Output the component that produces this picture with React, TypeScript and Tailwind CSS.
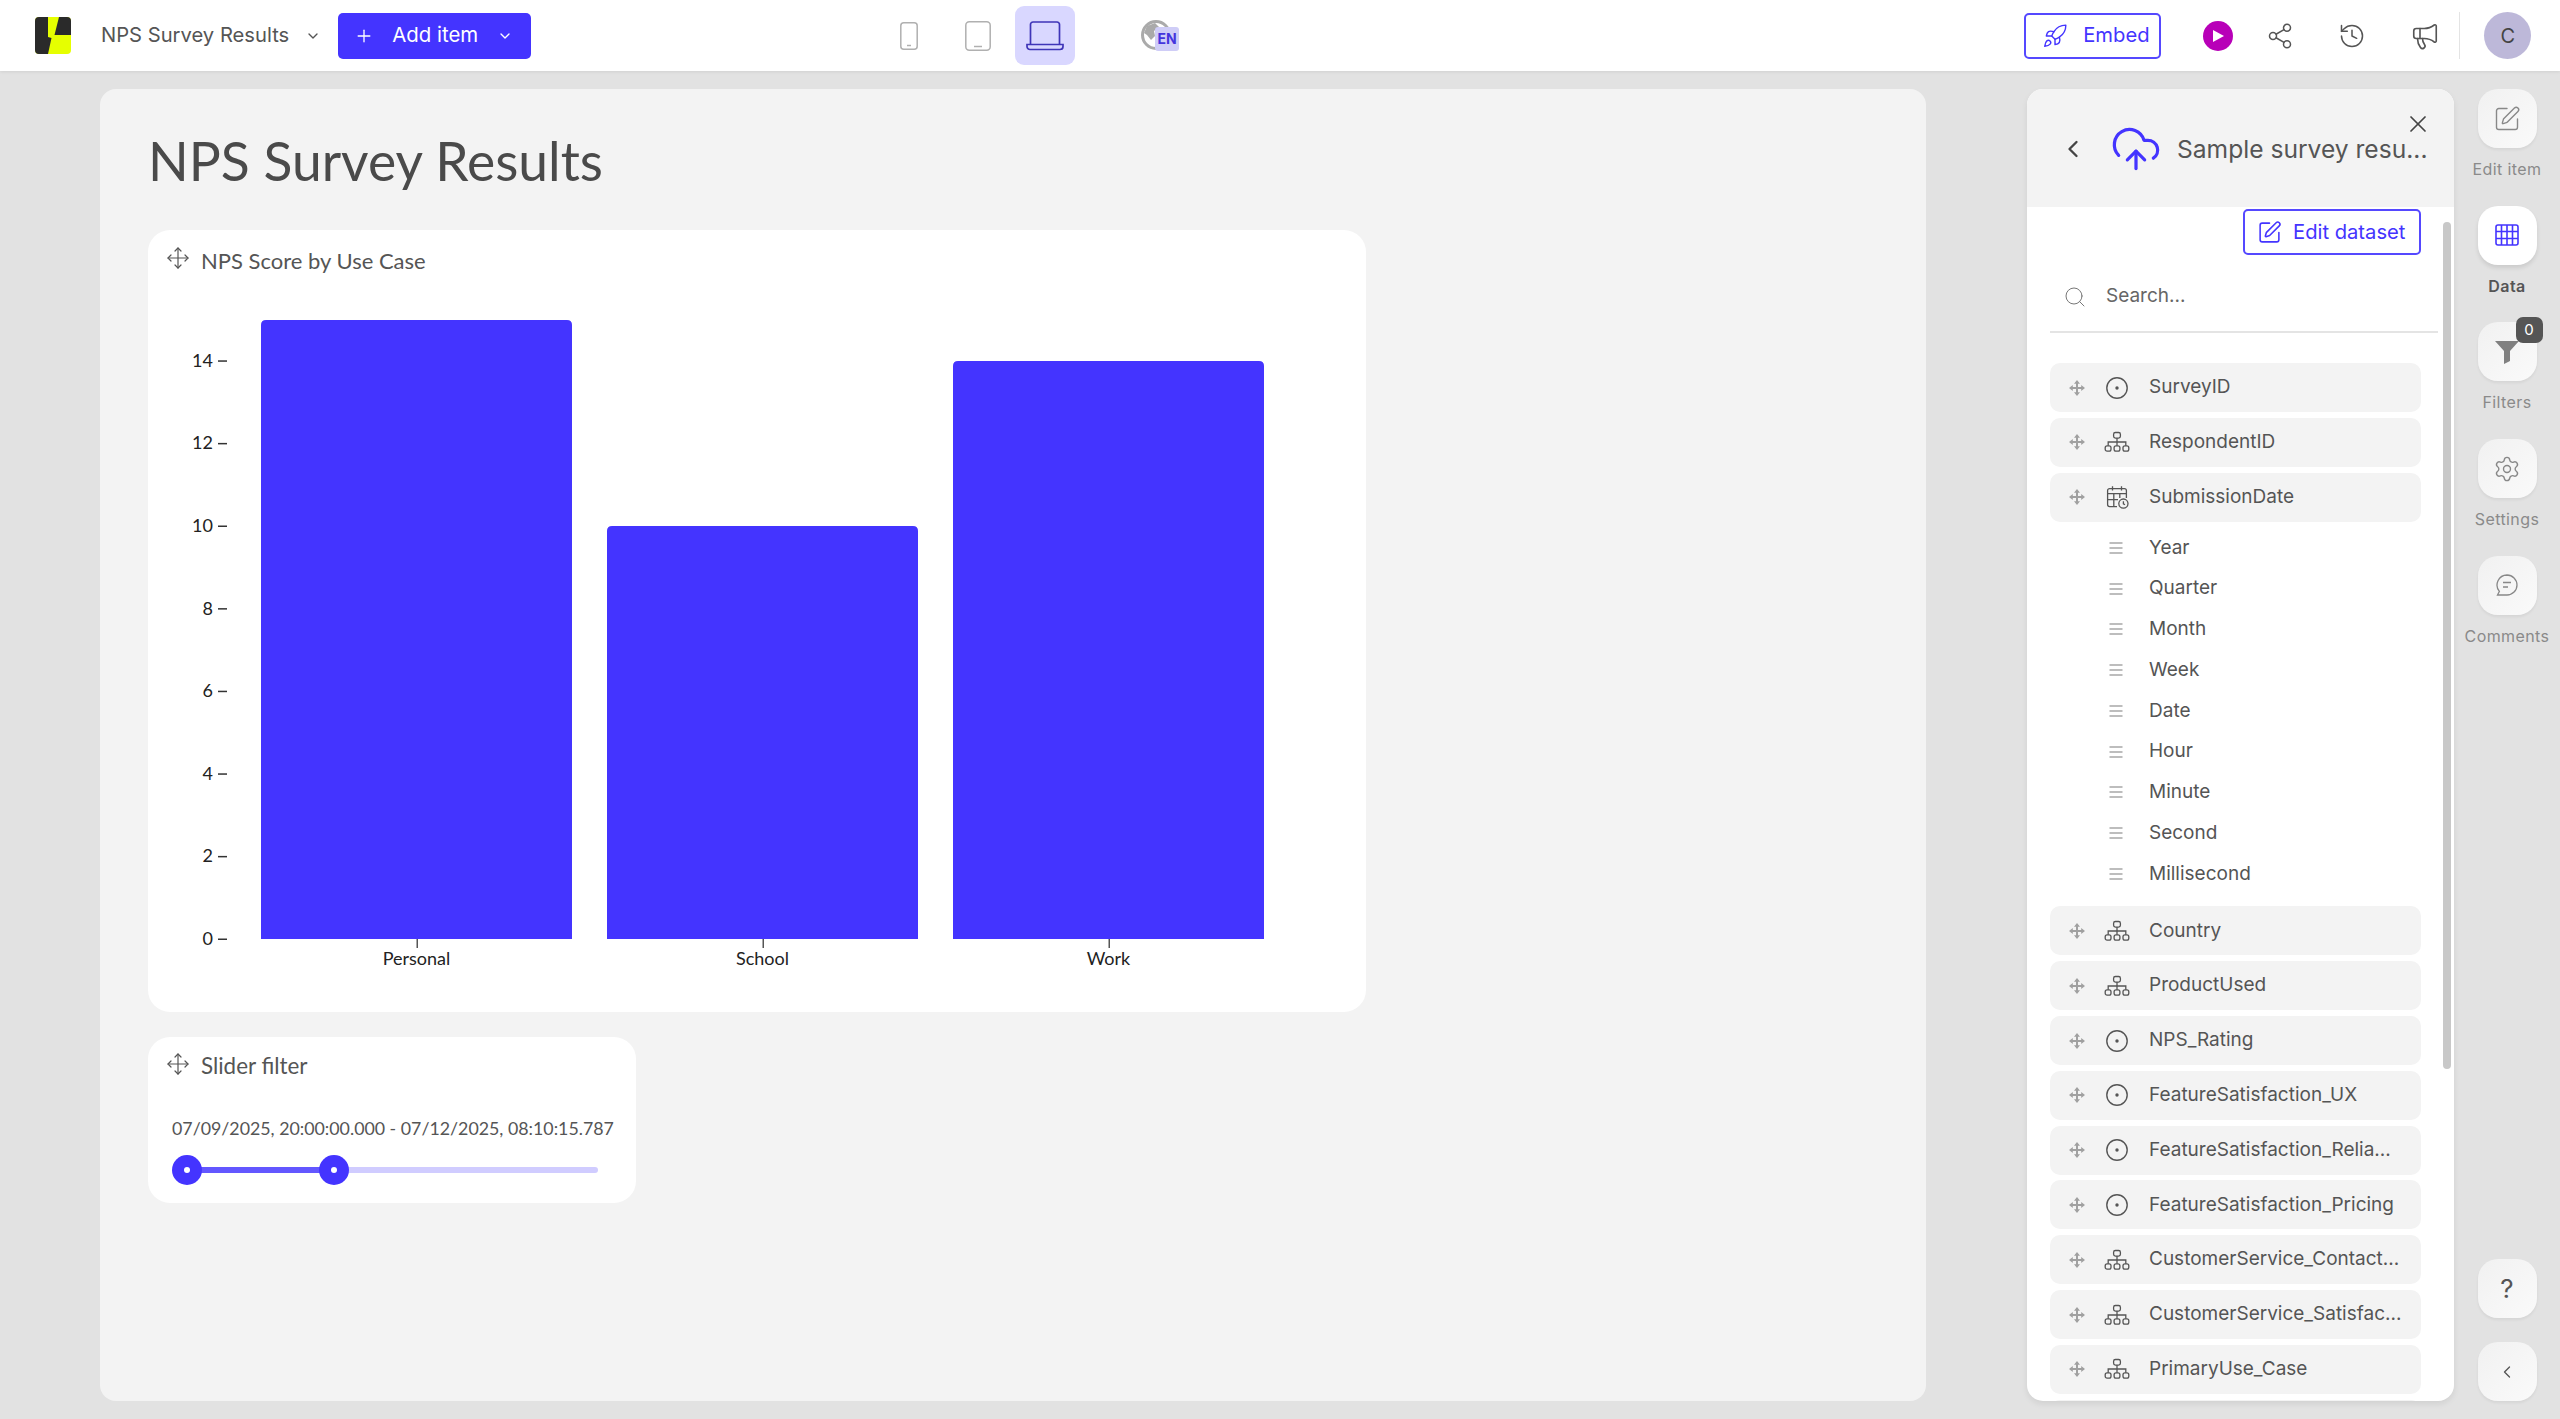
import {
  ChevronDown,
  ChevronLeft,
  CloudUpload,
  History,
  Megaphone,
  Move,
  Plus,
  Rocket,
  Search,
  Settings,
  Share2,
  SquarePen,
  X,
} from 'lucide-react';

const BLUE = '#4434ff';

type FieldKind = 'dot' | 'tree' | 'date';

const fieldsTop: { name: string; kind: FieldKind }[] = [
  { name: 'SurveyID', kind: 'dot' },
  { name: 'RespondentID', kind: 'tree' },
  { name: 'SubmissionDate', kind: 'date' },
];

const dateParts = ['Year', 'Quarter', 'Month', 'Week', 'Date', 'Hour', 'Minute', 'Second', 'Millisecond'];

const fieldsBottom: { name: string; kind: FieldKind }[] = [
  { name: 'Country', kind: 'tree' },
  { name: 'ProductUsed', kind: 'tree' },
  { name: 'NPS_Rating', kind: 'dot' },
  { name: 'FeatureSatisfaction_UX', kind: 'dot' },
  { name: 'FeatureSatisfaction_Relia...', kind: 'dot' },
  { name: 'FeatureSatisfaction_Pricing', kind: 'dot' },
  { name: 'CustomerService_Contact...', kind: 'tree' },
  { name: 'CustomerService_Satisfac...', kind: 'tree' },
  { name: 'PrimaryUse_Case', kind: 'tree' },
  { name: '', kind: 'dot' },
];

function DragHandle() {
  return (
    <svg width="16" height="16" viewBox="0 0 16 16" fill="#a0a0a0" className="shrink-0">
      <rect x="7" y="3" width="2" height="10" />
      <rect x="3" y="7" width="10" height="2" />
      <path d="M8 0 11 3.8H5ZM8 16 11 12.2H5ZM0 8 3.8 5V11ZM16 8 12.2 5V11Z" />
    </svg>
  );
}

function FieldIcon({ kind }: { kind: FieldKind }) {
  if (kind === 'dot') {
    return (
      <svg width="26" height="26" viewBox="0 0 26 26" fill="none" stroke="#555" strokeWidth="1.4">
        <circle cx="13" cy="13" r="10.2" />
        <circle cx="13" cy="13" r="1.7" fill="#555" stroke="none" />
      </svg>
    );
  }
  if (kind === 'tree') {
    return (
      <svg width="26" height="26" viewBox="0 0 26 26" fill="none" stroke="#555" strokeWidth="1.3">
        <rect x="9.6" y="3.5" width="6.8" height="5.6" rx="1.8" />
        <path d="M13 9.1V13M4.2 16.8V13H21.8V16.8M13 13V16.8" />
        <rect x="1.2" y="16.8" width="5.8" height="5.4" rx="1.9" />
        <rect x="10.1" y="16.8" width="5.8" height="5.4" rx="1.9" />
        <rect x="19" y="16.8" width="5.8" height="5.4" rx="1.9" />
      </svg>
    );
  }
  return (
    <svg width="26" height="26" viewBox="0 0 26 26" fill="none" stroke="#555" strokeWidth="1.3">
      <path d="M13 22.6H5.6A2 2 0 0 1 3.6 20.6V6.6A2 2 0 0 1 5.6 4.6H20.4A2 2 0 0 1 22.4 6.6V14" />
      <path d="M8.5 2.2V6.4M17.5 2.2V6.4M3.6 9.6H22.4M3.6 15.6H14M9.8 9.6V22.6M15.8 9.6V14" />
      <circle cx="19.4" cy="19.6" r="4.6" />
      <path d="M19.4 17.2V19.8L21 20.8" />
    </svg>
  );
}

function Lines() {
  return (
    <svg width="14" height="14" viewBox="0 0 14 14" stroke="#a8a8a8" strokeWidth="1.5" className="shrink-0">
      <path d="M0.5 2H13.5M0.5 7H13.5M0.5 12H13.5" />
    </svg>
  );
}

function FieldRow({ name, kind }: { name: string; kind: FieldKind }) {
  return (
    <div className="flex h-[49px] shrink-0 items-center rounded-[10px] bg-[#f3f3f3] pl-[19px] pr-[16px]">
      <DragHandle />
      <div className="ml-[16px] flex w-[32px] shrink-0 justify-center">
        <FieldIcon kind={kind} />
      </div>
      <span className="ml-[16px] whitespace-nowrap text-[19px] text-[#555]">{name}</span>
    </div>
  );
}

function RailButton({
  label,
  active,
  badge,
  children,
}: {
  label: string;
  active?: boolean;
  badge?: string;
  children: React.ReactNode;
}) {
  return (
    <div className="flex h-[116.7px] w-[96px] shrink-0 flex-col items-center">
      <div
        className={
          active
            ? 'relative flex h-[59px] w-[59px] items-center justify-center rounded-[20px] bg-white shadow-[0_3px_4px_rgba(0,0,0,0.1)]'
            : 'relative flex h-[59px] w-[59px] items-center justify-center rounded-[20px] bg-gradient-to-br from-[#f1f1f1] to-[#fafafa] shadow-[0_2px_3px_rgba(0,0,0,0.06)]'
        }
      >
        {children}
        {badge && (
          <span className="absolute right-[-6px] top-[-5px] flex h-[26px] w-[27px] items-center justify-center rounded-[7px] bg-[#555] text-[15px] text-white">
            {badge}
          </span>
        )}
      </div>
      <span
        className={
          active
            ? 'mt-[9px] text-[16px] font-semibold tracking-[0.4px] text-[#555]'
            : 'mt-[9px] text-[16px] tracking-[0.4px] text-[#8a8a8a]'
        }
      >
        {label}
      </span>
    </div>
  );
}

function BarChart() {
  const bars = [
    { label: 'Personal', x: 261, top: 320 },
    { label: 'School', x: 607, top: 526 },
    { label: 'Work', x: 953, top: 361 },
  ];
  const base = 939;
  const w = 311;
  const ticks = [0, 2, 4, 6, 8, 10, 12, 14];

  return (
    <svg viewBox="148 290 1218 722" className="block h-[722px] w-[1218px]">
      {ticks.map((t) => {
        const y = base - t * 41.3;
        return (
          <g key={t}>
            <text x="213" y={y + 6} textAnchor="end" fontSize="18" fill="#222" fontFamily="Lato, sans-serif">
              {t}
            </text>
            <rect x="218" y={y - 0.5} width="9" height="1.5" fill="#333" />
          </g>
        );
      })}
      {bars.map((b) => (
        <g key={b.label}>
          <path
            d={`M${b.x} ${base}V${b.top + 5}Q${b.x} ${b.top} ${b.x + 5} ${b.top}H${b.x + w - 5}Q${b.x + w} ${b.top} ${b.x + w} ${b.top + 5}V${base}Z`}
            fill={BLUE}
          />
          <rect x={b.x + w / 2} y={base} width="1.5" height="9" fill="#555" />
          <text
            x={b.x + w / 2}
            y="965"
            textAnchor="middle"
            fontSize="18"
            fill="#222"
            fontFamily="Lato, sans-serif"
          >
            {b.label}
          </text>
        </g>
      ))}
    </svg>
  );
}

export default function App() {
  return (
    <div className="flex h-[1419px] w-[2560px] flex-col overflow-hidden bg-[#e2e2e2] font-['Inter',sans-serif]">
      {/* top bar */}
      <header className="z-10 flex h-[71px] shrink-0 items-center bg-white pl-[35px] shadow-[0_1px_3px_rgba(0,0,0,0.08)]">
        <svg width="36" height="37" viewBox="0 0 36 37" className="shrink-0">
          <rect width="36" height="37" rx="4" fill="#e6ff00" />
          <path d="M4 0H13V20L16.5 21 13 37H4A4 4 0 0 1 0 33V4A4 4 0 0 1 4 0Z" fill="#2a2a2a" />
          <path d="M24 0H32A4 4 0 0 1 36 4V18H19.5Z" fill="#2a2a2a" />
        </svg>
        <span className="ml-[30px] text-[20.2px] text-[#555]">NPS Survey Results</span>
        <ChevronDown size={16} color="#555" className="ml-[16px]" />
        <button className="ml-[17px] flex h-[46px] w-[193px] items-center rounded-[5px] bg-[#4434ff] pl-[16px] text-white">
          <Plus size={20} strokeWidth={1.6} />
          <span className="ml-[18px] text-[20.4px]">Add item</span>
          <ChevronDown size={16} className="ml-[19px]" />
        </button>

        {/* device switch */}
        <div className="ml-[369px] flex h-[23px] w-[18px] shrink-0 items-center">
          <svg width="18" height="28" viewBox="0 0 18 28" fill="none" stroke="#b0b0b0" strokeWidth="1.5">
            <rect x="0.8" y="0.8" width="16.4" height="26.4" rx="3" />
            <path d="M7 23.5H11" />
          </svg>
        </div>
        <svg width="26" height="30" viewBox="0 0 26 30" fill="none" stroke="#b0b0b0" strokeWidth="1.5" className="ml-[47px]">
          <rect x="0.8" y="0.8" width="24.4" height="28.4" rx="3.5" />
          <path d="M9 25.5H17" />
        </svg>
        <div className="ml-[24px] flex h-[59px] w-[60px] items-center justify-center rounded-[9px] bg-[#d9d7ff]">
          <svg width="38" height="30" viewBox="0 0 38 30" fill="none" stroke="#3f35b8" strokeWidth="1.7">
            <path d="M4.5 23V3.5A2.5 2.5 0 0 1 7 1H31A2.5 2.5 0 0 1 33.5 3.5V23" />
            <path d="M1 23.5H37V25.5A3 3 0 0 1 34 28.5H4A3 3 0 0 1 1 25.5Z" />
          </svg>
        </div>
        <div className="relative ml-[66px] h-[30px] w-[30px] -translate-y-[1px] rounded-full border-[3px] border-[#aaa] bg-white">
          <svg width="24" height="24" viewBox="0 0 24 24" fill="#aaa">
            <path d="M3 3 11 0 15 4 10 8 11 13 7 17 3 12 0 10ZM15 19 20 14 24 17 19 24Z" />
          </svg>
          <span className="absolute left-[11px] top-[4px] flex h-[24px] w-[24px] items-center justify-center rounded-[3px] bg-[#cfcdf7] text-[14px] font-bold leading-none text-[#4434dd]">
            EN
          </span>
        </div>

        {/* right actions */}
        <button className="ml-[853px] flex h-[46px] w-[137px] items-center rounded-[5px] border-2 border-[#5548ff] pl-[16px] text-[#4434ff]">
          <Rocket size={26} strokeWidth={1.3} />
          <span className="ml-[15px] text-[20.2px]">Embed</span>
        </button>
        <div className="ml-[42px] flex h-[30px] w-[30px] items-center justify-center rounded-full bg-[#b800b8]">
          <svg width="14" height="14" viewBox="0 0 14 14" fill="#fff">
            <path d="M2 1 13 7 2 13Z" />
          </svg>
        </div>
        <Share2 size={28} strokeWidth={1.3} color="#555" className="ml-[33px]" />
        <History size={28} strokeWidth={1.3} color="#555" className="ml-[44px]" />
        <Megaphone size={30} strokeWidth={1.3} color="#555" className="ml-[44px]" />
        <div className="ml-[19px] h-[47px] w-px bg-[#e4e4e4]" />
        <div className="ml-[24px] flex h-[47px] w-[47px] items-center justify-center rounded-full bg-[#bdb8d9] text-[20px] text-[#444]">
          C
        </div>
      </header>

      <main className="flex min-h-0 flex-1 pl-[100px] pt-[18px] pb-[18px]">
        {/* canvas */}
        <section className="w-[1826px] shrink-0 rounded-[16px] bg-[#f3f3f3] pl-[48px] font-['Lato',sans-serif]">
          <h1 className="mt-[37px] text-[53.4px] leading-[68px] text-[#4a4a4a]">NPS Survey Results</h1>

          <div className="mt-[36px] h-[782px] w-[1218px] rounded-[22px] bg-white">
            <div className="flex h-[60px] items-center pl-[18px]">
              <Move size={24} strokeWidth={1.2} color="#555" className="-mt-[4px]" />
              <span className="ml-[11px] text-[22px] text-[#555]">NPS Score by Use Case</span>
            </div>
            <BarChart />
          </div>

          <div className="mt-[25px] h-[166px] w-[488px] rounded-[22px] bg-white pl-[24px]">
            <div className="-ml-[6px] flex h-[58px] items-center">
              <Move size={24} strokeWidth={1.2} color="#555" className="-mt-[4px]" />
              <span className="ml-[11px] text-[22.4px] text-[#555]">Slider filter</span>
            </div>
            <div className="mt-[22px] whitespace-nowrap text-[17.8px] leading-[22px] text-[#555]">
              07/09/2025, 20:00:00.000 - 07/12/2025, 08:10:15.787
            </div>
            <div className="relative mt-[16px] h-[30px] w-[426px]">
              <div className="absolute left-[15px] top-[12px] h-[6px] w-[411px] rounded-full bg-[#d0ccff]" />
              <div className="absolute left-[15px] top-[12px] h-[6px] w-[147px] bg-[#6357ff]" />
              <div className="absolute left-0 top-0 flex h-[30px] w-[30px] items-center justify-center rounded-full bg-[#4434ff]">
                <div className="h-[6px] w-[6px] rounded-full bg-white" />
              </div>
              <div className="absolute left-[147px] top-0 flex h-[30px] w-[30px] items-center justify-center rounded-full bg-[#4434ff]">
                <div className="h-[6px] w-[6px] rounded-full bg-white" />
              </div>
            </div>
          </div>
        </section>

        {/* dataset panel */}
        <aside className="ml-[101px] flex w-[427px] shrink-0 flex-col overflow-hidden rounded-[16px] bg-white shadow-[0_3px_6px_rgba(0,0,0,0.08)]">
          <div className="relative flex h-[118px] shrink-0 items-center bg-[#f3f3f3] pt-[2px]">
            <ChevronLeft size={28} strokeWidth={2} color="#444" className="ml-[32px]" />
            <CloudUpload size={52} strokeWidth={1.5} color={BLUE} className="ml-[23px]" />
            <span className="ml-[15px] text-[24.6px] text-[#555]">Sample survey resu...</span>
            <X size={28} strokeWidth={1.5} color="#444" className="absolute right-[22px] top-[21px]" />
          </div>

          <div className="relative flex min-h-0 flex-1 flex-col overflow-hidden">
            <div className="absolute right-[3px] top-[15px] h-[847px] w-[8px] rounded-full bg-[#c8c8c8]" />
            <button className="ml-[216px] mt-[2px] flex h-[46px] w-[178px] shrink-0 items-center rounded-[5px] border-2 border-[#5548ff] pl-[12px] text-[#4434ff]">
              <SquarePen size={25} strokeWidth={1.5} />
              <span className="ml-[11px] text-[20.2px]">Edit dataset</span>
            </button>
            <div className="ml-[23px] mt-[7px] flex h-[71px] w-[388px] shrink-0 items-center border-b-2 border-[#e4e4e4] pl-[13px]">
              <Search size={24} strokeWidth={1} color="#777" />
              <span className="ml-[19px] text-[19px] text-[#666]">Search...</span>
            </div>

            <div className="ml-[23px] mt-[30px] flex w-[371px] flex-col gap-[5.8px]">
              {fieldsTop.map((f) => (
                <FieldRow key={f.name} name={f.name} kind={f.kind} />
              ))}
              <div className="flex flex-col pb-[6.5px]">
                {dateParts.map((p) => (
                  <div key={p} className="flex h-[40.75px] items-center pl-[59px]">
                    <Lines />
                    <span className="ml-[26px] text-[19px] text-[#555]">{p}</span>
                  </div>
                ))}
              </div>
              {fieldsBottom.map((f, i) => (
                <FieldRow key={i} name={f.name} kind={f.kind} />
              ))}
            </div>
          </div>
        </aside>

        {/* right rail */}
        <nav className="ml-[5px] flex w-[96px] shrink-0 flex-col items-center">
          <RailButton label="Edit item">
            <SquarePen size={28} strokeWidth={1.2} color="#888" />
          </RailButton>
          <RailButton label="Data" active>
            <svg width="24" height="22" viewBox="0 0 24 22" fill="none" stroke={BLUE} strokeWidth="1.6">
              <rect x="1" y="1" width="22" height="20" rx="2" />
              <path d="M1 7.5H23M1 14.5H23M6.5 1V21M12 1V21M17.5 1V21" />
            </svg>
          </RailButton>
          <RailButton label="Filters" badge="0">
            <svg width="26" height="24" viewBox="0 0 26 24" fill="#808080">
              <path d="M1 1H25L16 11V21L10 24V11Z" />
            </svg>
          </RailButton>
          <RailButton label="Settings">
            <Settings size={28} strokeWidth={1.2} color="#888" />
          </RailButton>
          <RailButton label="Comments">
            <svg width="24" height="24" viewBox="0 0 24 24" fill="none" stroke="#888" strokeWidth="1.3">
              <path d="M12 2A10 10 0 0 1 12 22H2.5L4.4 18.4A10 10 0 0 1 12 2Z" />
              <path d="M8 9.5H16M8 14H13" />
            </svg>
          </RailButton>

          <div className="mt-auto flex h-[59px] w-[59px] items-center justify-center rounded-[20px] bg-gradient-to-br from-[#f1f1f1] to-[#fafafa] text-[26px] text-[#555] shadow-[0_2px_3px_rgba(0,0,0,0.06)]">
            ?
          </div>
          <div className="mt-[24px] flex h-[59px] w-[59px] items-center justify-center rounded-[20px] bg-gradient-to-br from-[#f1f1f1] to-[#fafafa] shadow-[0_2px_3px_rgba(0,0,0,0.06)]">
            <ChevronLeft size={20} strokeWidth={1.6} color="#555" />
          </div>
        </nav>
      </main>
    </div>
  );
}
